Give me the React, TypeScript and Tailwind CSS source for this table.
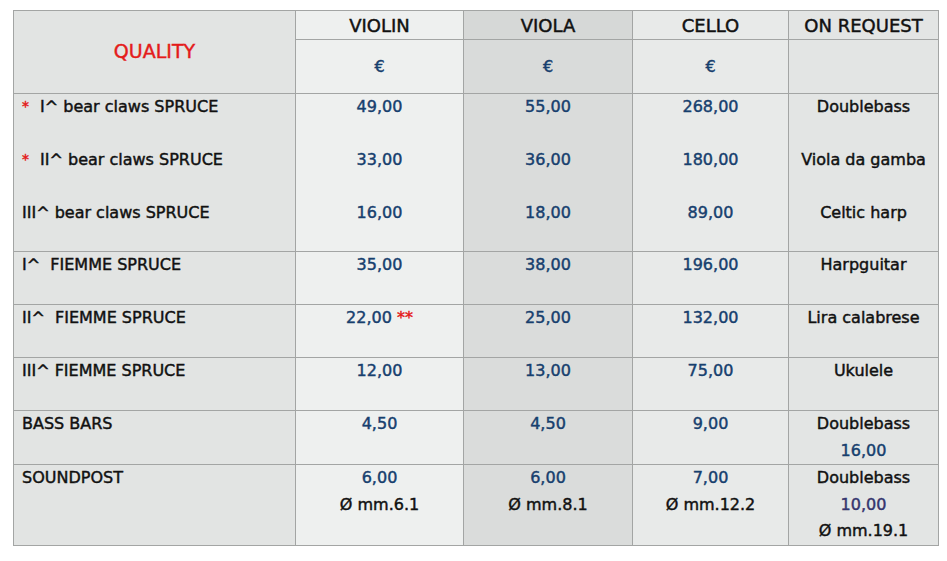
const rows: { label: React.ReactNode; violin: React.ReactNode; viola: string; cello: string; other: React.ReactNode; h: string; line: boolean }[] = [
  {
    label: <><span className="text-[#e41b1b] text-[14px] mr-[6px] relative top-[-1px]">*</span> I^ bear claws SPRUCE</>,
    violin: '49,00', viola: '55,00', cello: '268,00', other: 'Doublebass', h: 'h-[53px]', line: false,
  },
  {
    label: <><span className="text-[#e41b1b] text-[14px] mr-[6px] relative top-[-1px]">*</span> II^ bear claws SPRUCE</>,
    violin: '33,00', viola: '36,00', cello: '180,00', other: 'Viola da gamba', h: 'h-[53px]', line: false,
  },
  { label: 'III^ bear claws SPRUCE', violin: '16,00', viola: '18,00', cello: '89,00', other: 'Celtic harp', h: 'h-[52px]', line: true },
  { label: 'I^  FIEMME SPRUCE', violin: '35,00', viola: '38,00', cello: '196,00', other: 'Harpguitar', h: 'h-[53px]', line: true },
  {
    label: 'II^  FIEMME SPRUCE',
    violin: <>22,00 <span className="text-[#e41b1b]">**</span></>,
    viola: '25,00', cello: '132,00', other: 'Lira calabrese', h: 'h-[53px]', line: true,
  },
  { label: 'III^ FIEMME SPRUCE', violin: '12,00', viola: '13,00', cello: '75,00', other: 'Ukulele', h: 'h-[53px]', line: true },
  {
    label: 'BASS BARS', violin: '4,50', viola: '4,50', cello: '9,00',
    other: <>Doublebass<br /><span className="text-[#173f6e]">16,00</span></>, h: 'h-[54px]', line: true,
  },
  {
    label: 'SOUNDPOST',
    violin: <><span className="text-[#173f6e]">6,00</span><br /><span className="text-[#111]">Ø mm.6.1</span></>,
    viola: '', cello: '',
    other: <>Doublebass<br /><span className="text-[#35356e]">10,00</span><br />Ø mm.19.1</>,
    h: 'h-[80px]', line: false,
  },
];

const cell = 'border-x border-[#a3a5a4] align-top leading-[26.5px] p-0';

function App() {
  return (
    <div className="min-h-screen bg-white pt-[10px] pl-[13px]" style={{ fontFamily: '"DejaVu Sans", Verdana, sans-serif' }}>
      <table className="table-fixed border-collapse w-[925px] text-[16px] text-[#111] border border-[#a3a5a4] [-webkit-text-stroke:0.45px]">
        <colgroup>
          <col className="w-[282px]" />
          <col className="w-[168px]" />
          <col className="w-[169px]" />
          <col className="w-[156px]" />
          <col className="w-[150px]" />
        </colgroup>
        <tbody>
          <tr className="h-[29px] text-[18px]">
            <td rowSpan={2} className="border-x border-b border-[#a3a5a4] bg-[#e2e4e3] text-center align-middle text-[19px] text-[#e41b1b] pb-[2px]">QUALITY</td>
            <td className="border border-[#a3a5a4] bg-[#eef0ef] text-center align-middle">VIOLIN</td>
            <td className="border border-[#a3a5a4] bg-[#d6d8d7] text-center align-middle">VIOLA</td>
            <td className="border border-[#a3a5a4] bg-[#e8eae9] text-center align-middle">CELLO</td>
            <td className="border border-[#a3a5a4] bg-[#e3e5e4] text-center align-middle">ON REQUEST</td>
          </tr>
          <tr className="h-[54px] text-[#173f6e]">
            <td className="border border-[#a3a5a4] bg-[#eef0ef] text-center align-middle">€</td>
            <td className="border border-[#a3a5a4] bg-[#d9dbda] text-center align-middle">€</td>
            <td className="border border-[#a3a5a4] bg-[#e8eae9] text-center align-middle">€</td>
            <td className="border border-[#a3a5a4] bg-[#e3e5e4]"></td>
          </tr>
          {rows.map((r, i) => (
            <tr key={i} className={`${r.h} ${r.line ? 'border-b border-[#a3a5a4]' : ''}`}>
              <td className={`${cell} bg-[#e2e4e3] pl-[8px] whitespace-pre`}>{r.label}</td>
              <td className={`${cell} bg-[#eef0ef] text-center text-[#173f6e]`}>{r.violin}</td>
              <td className={`${cell} bg-[#dadcdb] text-center text-[#173f6e]`}>
                {r.label === 'SOUNDPOST' ? <>6,00<br /><span className="text-[#111]">Ø mm.8.1</span></> : r.viola}
              </td>
              <td className={`${cell} bg-[#e8eae9] text-center text-[#173f6e]`}>
                {r.label === 'SOUNDPOST' ? <>7,00<br /><span className="text-[#111]">Ø mm.12.2</span></> : r.cello}
              </td>
              <td className={`${cell} bg-[#e3e5e4] text-center`}>{r.other}</td>
            </tr>
          ))}
        </tbody>
      </table>
    </div>
  );
}

export default App;
